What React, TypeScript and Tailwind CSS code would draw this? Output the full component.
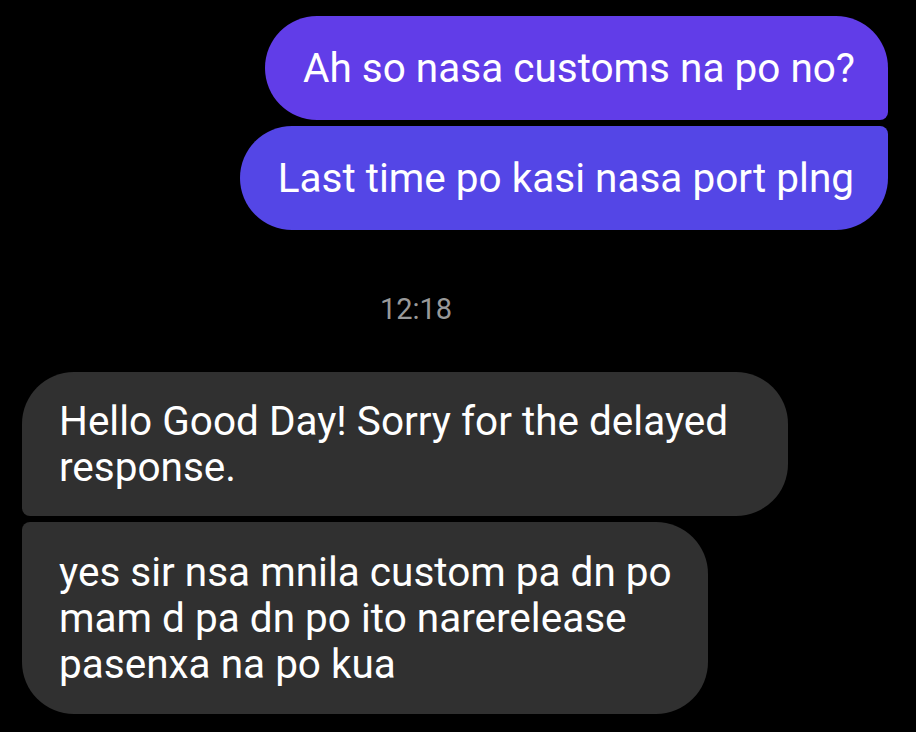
import React from "react";

export default function App() {
  return (
    <div
      className="w-[916px] h-[732px] bg-black overflow-hidden flex flex-col"
      style={{ fontFamily: "Roboto, 'Noto Sans', sans-serif" }}
    >
      <div className="flex flex-col items-end pr-[28px] pt-[16px] gap-[6px]">
        <div className="bg-[#613de8] text-white text-[40.5px] leading-[46px] pl-[38px] pr-[33px] py-[29px] rounded-tl-[52px] rounded-bl-[52px] rounded-tr-[52px] rounded-br-[8px] whitespace-nowrap">
          Ah so nasa customs na po no?
        </div>
        <div className="bg-[#5446e6] text-white text-[40.5px] leading-[46px] pl-[38px] pr-[34px] py-[29px] rounded-tl-[52px] rounded-bl-[52px] rounded-br-[52px] rounded-tr-[8px] whitespace-nowrap">
          Last time po kasi nasa port plng
        </div>
      </div>
      <div className="flex justify-center pt-[64px] pb-[48px] pr-[84px]">
        <span className="text-[29px] leading-[30px] text-[#999999]">12:18</span>
      </div>
      <div className="flex flex-col items-start pl-[22px] gap-[6px]">
        <div className="w-[766px] bg-[#303030] text-white text-[40.5px] leading-[46px] pl-[37px] pr-[20px] py-[26px] rounded-tl-[52px] rounded-tr-[52px] rounded-br-[52px] rounded-bl-[8px] whitespace-nowrap">
          Hello Good Day! Sorry for the delayed
          <br />
          response.
        </div>
        <div className="w-[686px] bg-[#303030] text-white text-[40.5px] leading-[46px] pl-[37px] pr-[10px] py-[27px] rounded-tl-[8px] rounded-tr-[52px] rounded-br-[52px] rounded-bl-[52px] whitespace-nowrap">
          yes sir nsa mnila custom pa dn po
          <br />
          mam d pa dn po ito narerelease
          <br />
          pasenxa na po kua
        </div>
      </div>
    </div>
  );
}
